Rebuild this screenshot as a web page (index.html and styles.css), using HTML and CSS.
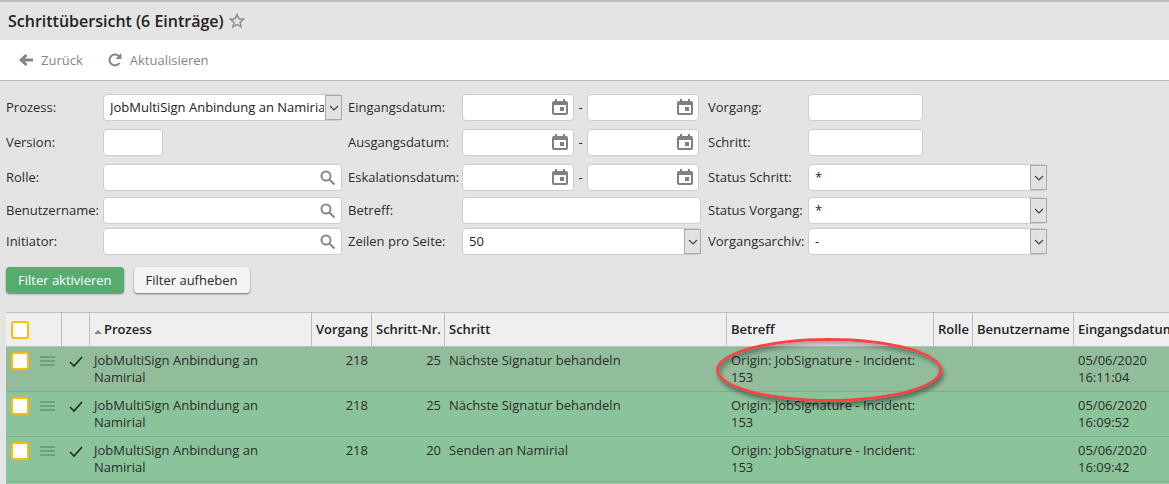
FILE: index.html
```html
<!DOCTYPE html>
<html lang="de">
<head>
    <meta charset="UTF-8">
    <meta name="viewport" content="width=device-width, initial-scale=1.0">
    <title>Schrittübersicht</title>
    <link rel="stylesheet" href="styles.css">
</head>
<body>

    <!-- Shared icons -->
    <svg class="sprite" aria-hidden="true">
        <symbol id="icon-calendar" viewBox="0 0 16 18">
            <path fill-rule="evenodd" d="M3 1h2v2h6V1h2v2h1a2 2 0 0 1 2 2v10a2 2 0 0 1-2 2H2a2 2 0 0 1-2-2V5a2 2 0 0 1 2-2h1zM2 7v8h12V7z"/>
            <path d="M8 9h4v4H8z"/>
        </symbol>
        <symbol id="icon-search" viewBox="0 0 16 16">
            <circle cx="6" cy="6" r="4.5" fill="none" stroke="currentColor" stroke-width="2"/>
            <path d="M9.500 9.500L14.500 14.500" stroke="currentColor" stroke-width="2.200"/>
        </symbol>
        <symbol id="icon-chevron" viewBox="0 0 10 6">
            <path d="M1 1l4 4 4-4" fill="none" stroke="currentColor" stroke-width="1.200"/>
        </symbol>
        <symbol id="icon-menu" viewBox="0 0 15 10">
            <path d="M0 1h15M0 5h15M0 9h15" stroke="currentColor" stroke-width="1"/>
        </symbol>
        <symbol id="icon-check" viewBox="0 0 14 12">
            <path d="M1 6l4 4 8-9" fill="none" stroke="currentColor" stroke-width="1.600"/>
        </symbol>
    </svg>

    <!-- Title -->
    <header class="title-bar">
        <h1>Schrittübersicht (6 Einträge)</h1>
        <button class="star" type="button" aria-label="Favorit">
            <svg width="16" height="16" viewBox="0 0 16 16"><path d="M8 1.500l1.900 4.300 4.700.4-3.600 3.100 1.100 4.600L8 11.500l-4.100 2.400L5 9.300 1.400 6.200l4.700-.4z" fill="none" stroke="currentColor" stroke-width="1.400"/></svg>
        </button>
    </header>

    <!-- Toolbar -->
    <nav class="toolbar">
        <a href="#">
            <svg width="14" height="12" viewBox="0 0 14 12"><path d="M7.500 1L2 6l5.500 5M2 6h12" fill="none" stroke="currentColor" stroke-width="2.800"/></svg>
            Zurück
        </a>
        <a href="#">
            <svg width="14" height="14" viewBox="0 0 14 14"><path d="M11.500 10A5.500 5.500 0 1 1 11.300 3.500" fill="none" stroke="currentColor" stroke-width="2"/><path d="M13.500 0v6H7.500z" fill="currentColor"/></svg>
            Aktualisieren
        </a>
    </nav>

    <!-- Filter -->
    <form class="filter" id="filterForm">
        <div class="fields">
            <label for="process">Prozess:</label>
            <div class="select">
                <select id="process"><option>JobMultiSign Anbindung an Namirial</option></select>
                <span class="arrow"><svg><use href="#icon-chevron"/></svg></span>
            </div>
            <label for="entryFrom">Eingangsdatum:</label>
            <div class="range">
                <div class="date"><input id="entryFrom" type="text"><svg><use href="#icon-calendar"/></svg></div>
                <span>-</span>
                <div class="date"><input type="text" aria-label="Eingangsdatum bis"><svg><use href="#icon-calendar"/></svg></div>
            </div>
            <label for="incident">Vorgang:</label>
            <input class="medium" id="incident" type="text">

            <label for="version">Version:</label>
            <input class="short" id="version" type="text">
            <label for="exitFrom">Ausgangsdatum:</label>
            <div class="range">
                <div class="date"><input id="exitFrom" type="text"><svg><use href="#icon-calendar"/></svg></div>
                <span>-</span>
                <div class="date"><input type="text" aria-label="Ausgangsdatum bis"><svg><use href="#icon-calendar"/></svg></div>
            </div>
            <label for="step">Schritt:</label>
            <input class="medium" id="step" type="text">

            <label for="role">Rolle:</label>
            <div class="search"><input id="role" type="text"><svg><use href="#icon-search"/></svg></div>
            <label for="escalationFrom">Eskalationsdatum:</label>
            <div class="range">
                <div class="date"><input id="escalationFrom" type="text"><svg><use href="#icon-calendar"/></svg></div>
                <span>-</span>
                <div class="date"><input type="text" aria-label="Eskalationsdatum bis"><svg><use href="#icon-calendar"/></svg></div>
            </div>
            <label for="stepStatus">Status Schritt:</label>
            <div class="select">
                <select id="stepStatus"><option>*</option></select>
                <span class="arrow"><svg><use href="#icon-chevron"/></svg></span>
            </div>

            <label for="user">Benutzername:</label>
            <div class="search"><input id="user" type="text"><svg><use href="#icon-search"/></svg></div>
            <label for="subject">Betreff:</label>
            <input id="subject" type="text">
            <label for="incidentStatus">Status Vorgang:</label>
            <div class="select">
                <select id="incidentStatus"><option>*</option></select>
                <span class="arrow"><svg><use href="#icon-chevron"/></svg></span>
            </div>

            <label for="initiator">Initiator:</label>
            <div class="search"><input id="initiator" type="text"><svg><use href="#icon-search"/></svg></div>
            <label for="pageSize">Zeilen pro Seite:</label>
            <div class="select">
                <select id="pageSize"><option>50</option></select>
                <span class="arrow"><svg><use href="#icon-chevron"/></svg></span>
            </div>
            <label for="archive">Vorgangsarchiv:</label>
            <div class="select">
                <select id="archive"><option>-</option></select>
                <span class="arrow"><svg><use href="#icon-chevron"/></svg></span>
            </div>
        </div>

        <div class="actions">
            <button class="btn primary" type="button">Filter aktivieren</button>
            <button class="btn" type="button">Filter aufheben</button>
        </div>
    </form>

    <!-- Steps -->
    <div class="table-wrap">
        <table>
            <colgroup>
                <col class="c-select"><col class="c-state"><col class="c-process"><col class="c-incident"><col class="c-number">
                <col class="c-step"><col class="c-subject"><col class="c-role"><col class="c-user"><col class="c-date">
            </colgroup>
            <thead>
                <tr>
                    <th><div class="tools"><input type="checkbox" aria-label="Alle auswählen"></div></th>
                    <th></th>
                    <th><span class="sort"></span>Prozess</th>
                    <th>Vorgang</th>
                    <th>Schritt-Nr.</th>
                    <th>Schritt</th>
                    <th>Betreff</th>
                    <th>Rolle</th>
                    <th>Benutzername</th>
                    <th>Eingangsdatum</th>
                </tr>
            </thead>
            <tbody>
                <tr class="active">
                    <td><div class="tools"><input type="checkbox" aria-label="Zeile auswählen"><svg class="menu"><use href="#icon-menu"/></svg></div></td>
                    <td><svg class="check"><use href="#icon-check"/></svg></td>
                    <td>JobMultiSign Anbindung an Namirial</td>
                    <td class="num">218</td>
                    <td class="num">25</td>
                    <td>Nächste Signatur behandeln</td>
                    <td class="marked">Origin: JobSignature - Incident: 153<span class="marker"></span></td>
                    <td></td>
                    <td></td>
                    <td>05/06/2020<br>16:11:04</td>
                </tr>
                <tr>
                    <td><div class="tools"><input type="checkbox" aria-label="Zeile auswählen"><svg class="menu"><use href="#icon-menu"/></svg></div></td>
                    <td><svg class="check"><use href="#icon-check"/></svg></td>
                    <td>JobMultiSign Anbindung an Namirial</td>
                    <td class="num">218</td>
                    <td class="num">25</td>
                    <td>Nächste Signatur behandeln</td>
                    <td>Origin: JobSignature - Incident: 153</td>
                    <td></td>
                    <td></td>
                    <td>05/06/2020<br>16:09:52</td>
                </tr>
                <tr>
                    <td><div class="tools"><input type="checkbox" aria-label="Zeile auswählen"><svg class="menu"><use href="#icon-menu"/></svg></div></td>
                    <td><svg class="check"><use href="#icon-check"/></svg></td>
                    <td>JobMultiSign Anbindung an Namirial</td>
                    <td class="num">218</td>
                    <td class="num">20</td>
                    <td>Senden an Namirial</td>
                    <td>Origin: JobSignature - Incident: 153</td>
                    <td></td>
                    <td></td>
                    <td>05/06/2020<br>16:09:42</td>
                </tr>
                <tr class="next">
                    <td colspan="10"></td>
                </tr>
            </tbody>
        </table>
    </div>

</body>
</html>
```
FILE: styles.css
```css
* {
    margin: 0;
    padding: 0;
    box-sizing: border-box;
}

body {
    font-family: "Open Sans", "Noto Sans", sans-serif;
    font-size: 13px;
    line-height: 17px;
    background-color: #e4e4e4;
    color: #2b2b2b;
    overflow: hidden;
}

.sprite {
    display: none;
}

/* Title */
.title-bar {
    display: flex;
    align-items: center;
    gap: 5px;
    height: 40px;
    padding: 0 8px;
    border-top: 2px solid #bcbcbc;
}

.title-bar h1 {
    font-size: 16px;
    font-weight: 600;
    line-height: 22px;
    color: #222;
}

.star {
    display: flex;
    border: none;
    background: none;
    color: #8a8a8a;
    cursor: pointer;
}

/* Toolbar */
.toolbar {
    display: flex;
    gap: 25px;
    height: 41px;
    padding: 0 19px;
    background-color: white;
    border-bottom: 1px solid #b8b8b8;
}

.toolbar a {
    display: flex;
    align-items: center;
    gap: 8px;
    color: #858585;
    text-decoration: none;
}

/* Filter */
.filter {
    padding: 13px 6px 19px;
}

.fields {
    display: grid;
    grid-template-columns: 97px 245px 114px 246px 100px 239px;
    grid-template-rows: 35px 35px 33px 31px 27px;
    align-items: start;
}

.fields label {
    line-height: 27px;
    white-space: nowrap;
}

.fields input,
.fields select {
    display: block;
    width: 239px;
    height: 27px;
    padding: 0 6px;
    border: 1px solid #cdcdcd;
    border-radius: 4px;
    background-color: white;
    color: #222;
    font: inherit;
    appearance: none;
}

.fields .short {
    width: 60px;
}

.fields .medium {
    width: 115px;
}

.select,
.search,
.date {
    position: relative;
    width: 239px;
}

.fields select {
    padding-right: 17px;
}

.arrow {
    position: absolute;
    top: 1px;
    right: 0;
    display: flex;
    align-items: center;
    justify-content: center;
    width: 17px;
    height: 25px;
    border: 1px solid #a9a9a9;
    background-color: #e2e2e2;
    color: #444;
    pointer-events: none;
}

.arrow svg {
    width: 10px;
    height: 6px;
}

.search svg {
    position: absolute;
    top: 6px;
    right: 6px;
    width: 16px;
    height: 16px;
    color: #8a8a8a;
}

.range {
    display: flex;
    line-height: 27px;
}

.range span {
    width: 13px;
    text-align: center;
}

.date,
.fields .date input {
    width: 112px;
}

.date svg {
    position: absolute;
    top: 4px;
    right: 6px;
    width: 16px;
    height: 18px;
    fill: #808080;
}

.actions {
    display: flex;
    gap: 10px;
    margin-top: 12px;
}

.btn {
    height: 26px;
    padding: 0 12px;
    border: none;
    border-radius: 4px;
    background-color: #f4f4f4;
    box-shadow: 0 1px 2px rgba(0, 0, 0, 0.5);
    color: #2b2b2b;
    font: inherit;
    cursor: pointer;
}

.btn.primary {
    background-color: #56ab6e;
    color: white;
}

/* Table */
.table-wrap {
    padding-left: 6px;
    overflow: hidden;
}

table {
    width: 1178px;
    table-layout: fixed;
    border-collapse: separate;
    border-spacing: 0;
    border-top: 1px solid #bdbdbd;
}

.c-select { width: 56px; }
.c-state { width: 28px; }
.c-process { width: 222px; }
.c-incident { width: 60px; }
.c-number { width: 73px; }
.c-step { width: 282px; }
.c-subject { width: 207px; }
.c-role { width: 39px; }
.c-user { width: 101px; }
.c-date { width: 110px; }

th {
    height: 34px;
    padding: 0 4px;
    border-right: 1px solid #bdbdbd;
    border-bottom: 1px solid #bdbdbd;
    background-color: #efefef;
    color: #222;
    font-weight: 600;
    text-align: left;
    white-space: nowrap;
}

td {
    height: 45px;
    padding: 5px 4px;
    border-bottom: 1px solid #7fae8b;
    background-color: #8bc49b;
    vertical-align: top;
}

.active td {
    background-color: #91bd9b;
}

.next td {
    height: 17px;
}

.num {
    text-align: right;
}

.sort {
    display: inline-block;
    margin-right: 2px;
    border: 4px solid transparent;
    border-top: none;
    border-bottom-color: #8a8a8a;
}

.tools {
    display: flex;
    align-items: center;
    gap: 11px;
}

.tools input {
    width: 18px;
    height: 18px;
    margin-left: 1px;
    border: 2px solid #fdbb0c;
    border-radius: 3px;
    background-color: white;
    appearance: none;
}

.menu {
    width: 15px;
    height: 10px;
    color: #547a5e;
}

.check {
    display: block;
    width: 14px;
    height: 12px;
    margin: 4px 3px;
    color: #1f2b22;
}

/* Highlight drawn over the subject cell */
.marked {
    position: relative;
}

.marker {
    position: absolute;
    top: -9px;
    left: -11px;
    width: 226px;
    height: 64px;
    border: 3px solid #fb4141;
    border-radius: 50%;
    box-shadow: 2px 4px 4px rgba(0, 0, 0, 0.4), inset 2px 4px 4px rgba(0, 0, 0, 0.3);
    pointer-events: none;
}
```
